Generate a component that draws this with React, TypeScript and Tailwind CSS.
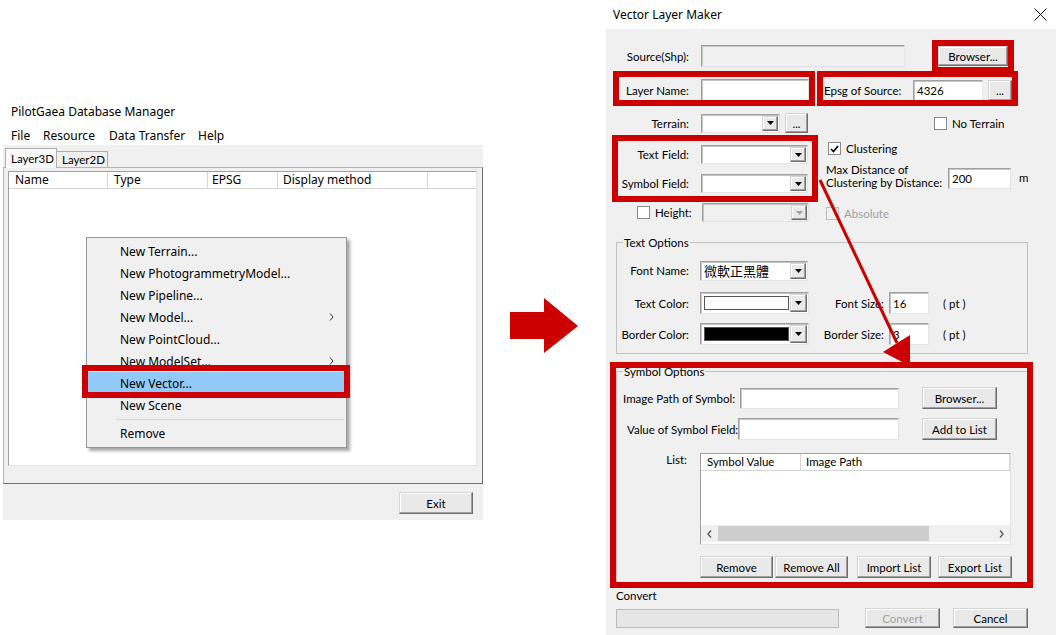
import React from 'react'

const F = "font-['Noto_Sans','Noto_Sans_CJK_TC',sans-serif]"
const D = "font-['Lato','Noto_Sans_CJK_TC',sans-serif]"

const sunkenCls =
  'border border-t-[#a0a0a0] border-l-[#a0a0a0] border-r-[#e3e3e3] border-b-[#e3e3e3] shadow-[inset_1px_1px_0_#c4c4c4]'
const raisedCls =
  'border border-t-[#d4d4d4] border-l-[#d4d4d4] border-r-[#6d6d6d] border-b-[#6d6d6d] shadow-[inset_-1px_-1px_0_#a0a0a0,inset_1px_1px_0_#ffffff] bg-[#e9e9e9]'

function Btn({ className = '', children, disabled }: { className?: string; children?: React.ReactNode; disabled?: boolean }) {
  return (
    <div className={`shrink-0 flex items-center justify-center ${raisedCls} ${disabled ? 'text-[#a0a0a0]' : ''} ${className}`}>
      {children}
    </div>
  )
}

function Field({ className = '', children, disabled }: { className?: string; children?: React.ReactNode; disabled?: boolean }) {
  return (
    <div className={`shrink-0 flex items-center pl-[3px] ${sunkenCls} ${disabled ? 'bg-[#f0f0f0]' : 'bg-white'} ${className}`}>
      {children}
    </div>
  )
}

function Tri({ disabled }: { disabled?: boolean }) {
  return (
    <svg width="7" height="4" viewBox="0 0 7 4">
      <path d="M0 0h7L3.5 4z" fill={disabled ? '#a0a0a0' : '#000'} />
    </svg>
  )
}

function Combo({ className = '', children, disabled }: { className?: string; children?: React.ReactNode; disabled?: boolean }) {
  return (
    <div className={`shrink-0 flex items-stretch p-[1px] ${sunkenCls} ${disabled ? 'bg-[#f0f0f0]' : 'bg-white'} ${className}`}>
      <div className="flex-1 flex items-center pl-[2px] overflow-hidden">{children}</div>
      <div className={`w-[16px] flex items-center justify-center ${raisedCls}`}>
        <Tri disabled={disabled} />
      </div>
    </div>
  )
}

function ColorCombo({ color }: { color: string }) {
  return (
    <div className={`shrink-0 ml-[11px] w-[109px] h-[22px] flex items-stretch p-[1px] bg-white ${sunkenCls}`}>
      <div className="flex-1 p-[2px] pr-[1px]">
        <div className={`w-full h-full border border-[#555] ${color}`} />
      </div>
      <div className={`w-[17px] flex items-center justify-center ${raisedCls}`}>
        <Tri />
      </div>
    </div>
  )
}

function Check({ checked, disabled }: { checked?: boolean; disabled?: boolean }) {
  return (
    <div
      className={`w-[13px] h-[13px] shrink-0 flex items-center justify-center border ${
        disabled ? 'bg-[#f0f0f0] border-[#bcbcbc]' : 'bg-white border-[#8a8a8a]'
      }`}
    >
      {checked && (
        <svg width="9" height="8" viewBox="0 0 9 8">
          <path d="M1 4l2.5 2.5L8 1" stroke="#000" strokeWidth="1.7" fill="none" />
        </svg>
      )}
    </div>
  )
}

function Legend({ children }: { children: React.ReactNode }) {
  return <span className="block w-fit -mt-[8px] ml-[6px] px-[1px] bg-[#f0f0f0] leading-[15px]">{children}</span>
}

function Chevron() {
  return (
    <svg width="5" height="8" viewBox="0 0 5 8">
      <path d="M1 0.5L4 4L1 7.5" stroke="#333" strokeWidth="1" fill="none" />
    </svg>
  )
}

function MainWindow() {
  const menu = ['New Terrain...', 'New PhotogrammetryModel...', 'New Pipeline...', 'New Model...', 'New PointCloud...', 'New ModelSet...']
  return (
    <>
      <div className="absolute left-0 top-[100px] w-[490px] text-[12px]">
        <div className="h-[22px] pl-[11px] flex items-center">PilotGaea Database Manager</div>
        <div className="h-[23px] pl-[11px] pt-[4px] flex items-center">
          <span className="w-[32px]">File</span>
          <span className="w-[66px]">Resource</span>
          <span className="w-[89px]">Data Transfer</span>
          <span>Help</span>
        </div>
        <div className="ml-[3px] w-[480px] h-[375px] bg-[#f0f0f0]">
          <div className={`h-[22px] flex items-end pl-[2px] text-[11.5px] ${D}`}>
            <div className="relative z-10 w-[52px] h-[20px] -mb-[1px] bg-[#fafafa] border border-[#adadad] border-b-0 pl-[5px] pt-[2px]">
              Layer3D
            </div>
            <div className="w-[51px] h-[16px] border border-l-0 border-b-0 border-[#adadad] pl-[5px] leading-[15px]">Layer2D</div>
          </div>
          <div className="w-[480px] h-[317px] border border-[#b4b4b4] border-r-[#6d6d6d] border-b-[#6d6d6d] pt-[3px] pl-[4px]">
            <div className="w-[469px] h-[295px] bg-white border border-[#a0a0a0] border-r-[#e3e3e3] border-b-[#e3e3e3]">
              <div className="flex h-[17px] border-b border-[#d5d5d5]">
                <div className="w-[99px] pl-[6px] border-r border-[#d5d5d5]">Name</div>
                <div className="w-[100px] pl-[6px] border-r border-[#d5d5d5]">Type</div>
                <div className="w-[70px] pl-[4px] border-r border-[#d5d5d5]">EPSG</div>
                <div className="w-[150px] pl-[5px] border-r border-[#d5d5d5]">Display method</div>
                <div className="flex-1" />
              </div>
            </div>
          </div>
          <Btn className={`mt-[8px] ml-[396px] w-[74px] h-[22px] text-[11.5px] ${D}`}>Exit</Btn>
        </div>
      </div>

      <div className="absolute left-[86px] top-[237px] w-[261px] h-[211px] bg-[#f0f0f0] border border-[#979797] shadow-[3px_3px_3px_rgba(0,0,0,0.35)] pt-[2px] text-[12px]">
        {menu.map((m, i) => (
          <div key={m} className="h-[22px] flex items-center pl-[33px] pr-[12px]">
            <span className="flex-1">{m}</span>
            {(i === 3 || i === 5) && <Chevron />}
          </div>
        ))}
        <div className="h-[22px] ml-[1px] mr-[2px] flex items-center pl-[32px] bg-[#91c9f7]">New Vector...</div>
        <div className="h-[22px] flex items-center pl-[33px]">New Scene</div>
        <div className="h-[6px] flex items-center pl-[29px] pr-[2px]">
          <div className="w-full h-[1px] bg-[#d7d7d7]" />
        </div>
        <div className="h-[22px] flex items-center pl-[33px]">Remove</div>
      </div>
    </>
  )
}

function VectorDialog() {
  return (
    <div className={`absolute left-[606px] top-0 w-[452px] h-[635px] text-[11.5px] ${D}`}>
      <div className={`h-[29px] flex items-center pl-[7px] text-[12px] ${F}`}>
        <span>Vector Layer Maker</span>
        <svg className="ml-auto mr-[11px]" width="13" height="13" viewBox="0 0 13 13">
          <path d="M0.5 0.5L12.5 12.5M12.5 0.5L0.5 12.5" stroke="#111" strokeWidth="1" />
        </svg>
      </div>
      <div className="w-[450px] h-[606px] bg-[#f0f0f0] pt-[16px]">
        {/* source */}
        <div className="flex items-center h-[22px]">
          <span className="w-[83px] text-right shrink-0">Source(Shp):</span>
          <Field disabled className="ml-[12px] w-[204px] h-[22px]" />
          <Btn className="ml-[33px] w-[70px] h-[20px]">Browser...</Btn>
        </div>
        {/* layer name / epsg */}
        <div className="flex items-center h-[22px] mt-[12px]">
          <span className="w-[83px] text-right shrink-0">Layer Name:</span>
          <Field className="ml-[12px] w-[108px] h-[22px]" />
          <span className="ml-[15px] w-[89px] shrink-0">Epsg of Source:</span>
          <Field className="w-[70px] h-[21px]">4326</Field>
          <Btn className="ml-[5px] w-[24px] h-[21px]">...</Btn>
        </div>
        {/* terrain */}
        <div className="flex items-center h-[20px] mt-[12px]">
          <span className="w-[83px] text-right shrink-0">Terrain:</span>
          <Combo className="ml-[12px] w-[79px] h-[19px]" />
          <Btn className="ml-[5px] w-[23px] h-[20px]">...</Btn>
          <div className="ml-[126px]">
            <Check />
          </div>
          <span className="ml-[5px]">No Terrain</span>
        </div>
        {/* fields + clustering */}
        <div className="flex mt-[3px]">
          <div className="w-[212px] shrink-0">
            <div className="flex items-center h-[19px] mt-[9px]">
              <span className="w-[83px] text-right shrink-0">Text Field:</span>
              <Combo className="ml-[12px] w-[107px] h-[19px]" />
            </div>
            <div className="flex items-center h-[19px] mt-[10px]">
              <span className="w-[83px] text-right shrink-0">Symbol Field:</span>
              <Combo className="ml-[12px] w-[107px] h-[19px]" />
            </div>
            <div className="flex items-center h-[19px] mt-[10px]">
              <div className="ml-[31px]">
                <Check />
              </div>
              <span className="ml-[5px] w-[35px] shrink-0">Height:</span>
              <Combo disabled className="ml-[12px] w-[107px] h-[19px]" />
            </div>
          </div>
          <div className="ml-[8px] flex-1">
            <div className="flex items-center h-[13px] mt-[6px]">
              <div className="ml-[2px]">
                <Check checked />
              </div>
              <span className="ml-[5px]">Clustering</span>
            </div>
            <div className="flex mt-[7px]">
              <div className="w-[122px] shrink-0 leading-[13px] pt-[1px]">
                Max Distance of
                <br />
                Clustering by Distance:
              </div>
              <Field className="mt-[6px] w-[63px] h-[21px]">200</Field>
              <span className="ml-[8px] mt-[9px] leading-[13px]">m</span>
            </div>
            <div className="flex items-center h-[13px] mt-[18px]">
              <Check disabled />
              <span className="ml-[5px] text-[#a0a0a0]">Absolute</span>
            </div>
          </div>
        </div>

        {/* text options */}
        <div className="mt-[20px] ml-[10px] w-[412px] h-[112px] border border-[#c2c2c2]">
          <Legend>Text Options</Legend>
          <div className="flex items-center h-[19px] mt-[11px]">
            <span className="w-[72px] text-right shrink-0">Font Name:</span>
            <Combo className="ml-[11px] w-[108px] h-[20px]">
              <span className="text-[13px] font-['Noto_Sans_CJK_TC',sans-serif] leading-[15px]">微軟正黑體</span>
            </Combo>
          </div>
          <div className="flex items-center h-[22px] mt-[12px]">
            <span className="w-[72px] text-right shrink-0">Text Color:</span>
            <ColorCombo color="bg-white" />
            <span className="w-[75px] text-right shrink-0">Font Size:</span>
            <Field className="ml-[5px] w-[40px] h-[22px]">16</Field>
            <span className="ml-[14px]">( pt )</span>
          </div>
          <div className="flex items-center h-[22px] mt-[9px]">
            <span className="w-[72px] text-right shrink-0">Border Color:</span>
            <ColorCombo color="bg-black" />
            <span className="w-[75px] text-right shrink-0">Border Size:</span>
            <Field className="ml-[5px] w-[40px] h-[22px]">3</Field>
            <span className="ml-[14px]">( pt )</span>
          </div>
        </div>

        {/* symbol options */}
        <div className="mt-[17px] ml-[10px] w-[412px] h-[213px] border border-[#c2c2c2]">
          <Legend>Symbol Options</Legend>
          <div className="flex items-center h-[22px] mt-[8px]">
            <span className="ml-[6px] w-[117px] shrink-0">Image Path of Symbol:</span>
            <Field className="w-[159px] h-[21px]" />
            <Btn className="ml-[23px] w-[75px] h-[22px]">Browser...</Btn>
          </div>
          <div className="flex items-center h-[22px] mt-[9px]">
            <span className="ml-[10px] w-[111px] shrink-0">Value of Symbol Field:</span>
            <Field className="w-[161px] h-[22px]" />
            <Btn className="ml-[23px] w-[75px] h-[22px]">Add to List</Btn>
          </div>
          <div className="flex items-start mt-[13px]">
            <span className="w-[70px] text-right shrink-0 -mt-[1px]">List:</span>
            <div className="ml-[13px] w-[311px] h-[92px] flex flex-col bg-white border border-[#a0a0a0] border-r-[#e3e3e3] border-b-[#e3e3e3]">
              <div className="flex h-[17px] border-b border-[#d5d5d5] shrink-0">
                <div className="w-[100px] pl-[6px] border-r border-[#d5d5d5]">Symbol Value</div>
                <div className="flex-1 pl-[5px] border-r border-[#d5d5d5]">Image Path</div>
              </div>
              <div className="flex-1" />
              <div className="h-[17px] mb-[2px] bg-[#f0f0f0] flex items-center shrink-0">
                <span className="w-[17px] flex justify-center">
                  <svg width="5" height="8" viewBox="0 0 5 8">
                    <path d="M4 0.5L1 4l3 3.5" stroke="#606060" strokeWidth="1.4" fill="none" />
                  </svg>
                </span>
                <div className="w-[211px] h-[15px] bg-[#cdcdcd]" />
                <span className="ml-auto w-[17px] flex justify-center">
                  <svg width="5" height="8" viewBox="0 0 5 8">
                    <path d="M1 0.5L4 4L1 7.5" stroke="#606060" strokeWidth="1.4" fill="none" />
                  </svg>
                </span>
              </div>
            </div>
          </div>
          <div className="flex items-center h-[22px] mt-[11px]">
            <Btn className="ml-[83px] w-[73px] h-[22px]">Remove</Btn>
            <Btn className="ml-[2px] w-[73px] h-[22px]">Remove All</Btn>
            <Btn className="ml-[9px] w-[74px] h-[22px]">Import List</Btn>
            <Btn className="ml-[7px] w-[74px] h-[22px]">Export List</Btn>
          </div>
        </div>

        {/* convert */}
        <div className="ml-[10px] mt-[4px] leading-[15px]">Convert</div>
        <div className="flex items-center mt-[5px]">
          <div className="ml-[10px] w-[223px] h-[19px] bg-[#e6e6e6] border border-[#bcbcbc]" />
          <Btn disabled className="ml-[26px] w-[75px] h-[20px]">Convert</Btn>
          <Btn className="ml-[13px] w-[75px] h-[20px]">Cancel</Btn>
        </div>
      </div>
    </div>
  )
}

function Annotations() {
  const box = 'absolute border-[6px] border-[#cc0000] pointer-events-none'
  return (
    <>
      <div className={`${box} left-[82px] top-[365px] w-[268px] h-[33px]`} />
      <div className={`${box} left-[932px] top-[40px] w-[82px] h-[33px]`} />
      <div className={`${box} left-[613px] top-[71px] w-[202px] h-[35px]`} />
      <div className={`${box} left-[817px] top-[71px] w-[201px] h-[35px]`} />
      <div className={`${box} left-[612px] top-[135px] w-[206px] h-[67px]`} />
      <div className={`${box} left-[610px] top-[362px] w-[423px] h-[226px]`} />
      <svg className="absolute left-0 top-0 pointer-events-none" width="1058" height="635" viewBox="0 0 1058 635">
        <polygon points="510,312 544,312 544,298 578,326 544,353 544,339 510,339" fill="#cc0000" />
        <line x1="820" y1="180" x2="897" y2="343" stroke="#cc0000" strokeWidth="3" />
        <polygon points="883,352 910,335 910,366" fill="#cc0000" />
      </svg>
    </>
  )
}

export default function App() {
  return (
    <div className={`relative w-[1058px] h-[635px] overflow-hidden bg-white text-black leading-[15px] whitespace-nowrap ${F}`}>
      <MainWindow />
      <VectorDialog />
      <Annotations />
    </div>
  )
}
